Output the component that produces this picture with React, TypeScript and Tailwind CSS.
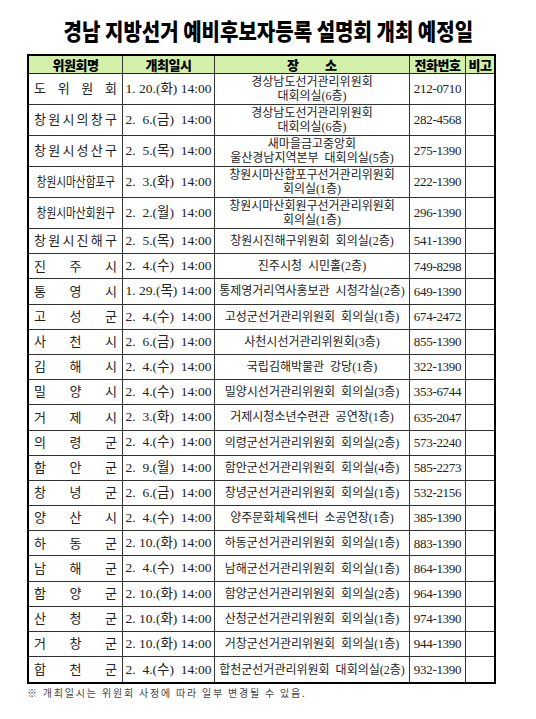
type Row = {
	name: string;
	date: string;
	place: string[];
	tel: string;
};

const rows: Row[] = [
	{ name: "도위원회", date: "1. 20.(화) 14:00", place: ["경상남도선거관리위원회", "대회의실(6층)"], tel: "212-0710" },
	{ name: "창원시의창구", date: "2.  6.(금)  14:00", place: ["경상남도선거관리위원회", "대회의실(6층)"], tel: "282-4568" },
	{ name: "창원시성산구", date: "2.  5.(목)  14:00", place: ["새마을금고중앙회", "울산경남지역본부  대회의실(5층)"], tel: "275-1390" },
	{ name: "창원시마산합포구", date: "2.  3.(화)  14:00", place: ["창원시마산합포구선거관리위원회", "회의실(1층)"], tel: "222-1390" },
	{ name: "창원시마산회원구", date: "2.  2.(월)  14:00", place: ["창원시마산회원구선거관리위원회", "회의실(1층)"], tel: "296-1390" },
	{ name: "창원시진해구", date: "2.  5.(목)  14:00", place: ["창원시진해구위원회  회의실(2층)"], tel: "541-1390" },
	{ name: "진주시", date: "2.  4.(수)  14:00", place: ["진주시청  시민홀(2층)"], tel: "749-8298" },
	{ name: "통영시", date: "1. 29.(목) 14:00", place: ["통제영거리역사홍보관  시청각실(2층)"], tel: "649-1390" },
	{ name: "고성군", date: "2.  4.(수)  14:00", place: ["고성군선거관리위원회  회의실(1층)"], tel: "674-2472" },
	{ name: "사천시", date: "2.  6.(금)  14:00", place: ["사천시선거관리위원회(3층)"], tel: "855-1390" },
	{ name: "김해시", date: "2.  4.(수)  14:00", place: ["국립김해박물관  강당(1층)"], tel: "322-1390" },
	{ name: "밀양시", date: "2.  4.(수)  14:00", place: ["밀양시선거관리위원회  회의실(3층)"], tel: "353-6744" },
	{ name: "거제시", date: "2.  3.(화)  14:00", place: ["거제시청소년수련관  공연장(1층)"], tel: "635-2047" },
	{ name: "의령군", date: "2.  4.(수)  14:00", place: ["의령군선거관리위원회  회의실(2층)"], tel: "573-2240" },
	{ name: "함안군", date: "2.  9.(월)  14:00", place: ["함안군선거관리위원회  회의실(4층)"], tel: "585-2273" },
	{ name: "창녕군", date: "2.  6.(금)  14:00", place: ["창녕군선거관리위원회  회의실(1층)"], tel: "532-2156" },
	{ name: "양산시", date: "2.  4.(수)  14:00", place: ["양주문화체육센터  소공연장(1층)"], tel: "385-1390" },
	{ name: "하동군", date: "2. 10.(화) 14:00", place: ["하동군선거관리위원회  회의실(1층)"], tel: "883-1390" },
	{ name: "남해군", date: "2.  4.(수)  14:00", place: ["남해군선거관리위원회  회의실(1층)"], tel: "864-1390" },
	{ name: "함양군", date: "2. 10.(화) 14:00", place: ["함양군선거관리위원회  회의실(2층)"], tel: "964-1390" },
	{ name: "산청군", date: "2. 10.(화) 14:00", place: ["산청군선거관리위원회  회의실(1층)"], tel: "974-1390" },
	{ name: "거창군", date: "2. 10.(화) 14:00", place: ["거창군선거관리위원회  회의실(1층)"], tel: "944-1390" },
	{ name: "합천군", date: "2.  4.(수)  14:00", place: ["합천군선거관리위원회  대회의실(2층)"], tel: "932-1390" },
];

const cols = "grid grid-cols-[94px_92px_195px_56px_28px]";

function Name({ text }: { text: string }) {
	if (text.length >= 8) {
		// long names are squeezed to fit the cell
		return (
			<div className="flex items-center justify-center border-r border-[#333] overflow-hidden">
				<span className="inline-block scale-x-[0.82] text-[13px] whitespace-nowrap">{text}</span>
			</div>
		);
	}
	return (
		<div className="flex items-center justify-between border-r border-[#333] px-[5px] text-[13px]">
			{text.split("").map((c, i) => (
				<span key={i}>{c}</span>
			))}
		</div>
	);
}

export default function App() {
	return (
		<div
			className="w-[536px] h-[719px] bg-white text-[#222]"
			style={{ fontFamily: '"Liberation Serif", "Noto Sans CJK KR", serif' }}
		>
			<div className="h-[54px] pt-[6px] flex items-center justify-center">
				<span
					className="inline-block scale-x-[0.87] text-[23px] font-black text-black whitespace-nowrap"
					style={{ fontFamily: '"Noto Sans CJK KR", sans-serif' }}
				>
					경남 지방선거 예비후보자등록 설명회 개최 예정일
				</span>
			</div>

			<div className="ml-[27px] w-[469px] border-2 border-black">
				<div
					className={cols + " h-[18px] bg-[#d2f0aa] border-b border-[#222] text-[13px] font-black text-black leading-none"}
					style={{ fontFamily: '"Noto Sans CJK KR", sans-serif' }}
				>
					<div className="flex items-center justify-center border-r border-[#333] tracking-[-0.5px]">위원회명</div>
					<div className="flex items-center justify-center border-r border-[#333] tracking-[-0.5px]">개최일시</div>
					<div className="flex items-center justify-center gap-[26px] border-r border-[#333]">
						<span>장</span>
						<span>소</span>
					</div>
					<div className="flex items-center justify-center border-r border-[#333] tracking-[-0.5px]">전화번호</div>
					<div className="flex items-center justify-center tracking-[-0.5px]">비고</div>
				</div>

				{rows.map((r, i) => (
					<div
						key={i}
						className={
							cols +
							" border-b border-[#333] last:border-b-0 " +
							(r.place.length > 1 ? "h-[31px]" : "h-[25.2px]")
						}
					>
						<Name text={r.name} />
						<div className="flex items-center justify-center border-r border-[#333] text-[13.5px] whitespace-pre">
							{r.date}
						</div>
						<div className="flex flex-col items-center justify-center border-r border-[#333] text-[12px] leading-[14px] whitespace-pre">
							{r.place.map((p, j) => (
								<span key={j}>{p}</span>
							))}
						</div>
						<div className="flex items-center justify-center border-r border-[#333] text-[13px] tracking-[-0.3px]">
							{r.tel}
						</div>
						<div />
					</div>
				))}
			</div>

			<div
				className="ml-[27px] mt-[2px] text-[10px] leading-[14px] tracking-[1.8px] text-[#444]"
				style={{ fontFamily: '"Noto Sans CJK KR", sans-serif' }}
			>
				※ 개최일시는 위원회 사정에 따라 일부 변경될 수 있음.
			</div>
		</div>
	);
}
